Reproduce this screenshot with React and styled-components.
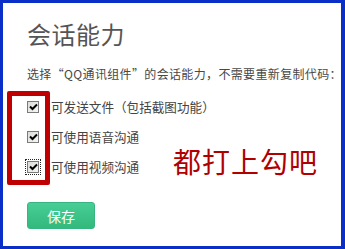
import React from "react";
import styled, { createGlobalStyle } from "styled-components";

const Global = createGlobalStyle`
  html, body { margin: 0; padding: 0; background: #ffffff; }
  body { font-family: "Noto Sans CJK SC", "Noto Sans", sans-serif; }
`;

const Frame = styled.div`
  position: relative;
  box-sizing: border-box;
  width: 345px;
  height: 249px;
  border-style: solid;
  border-color: #0a2fc8;
  border-width: 3px 4px 3px 3px;
  background: #ffffff;
  padding: 14px 0 0 24px;
  display: flex;
  flex-direction: column;
  align-items: flex-start;
`;

const Title = styled.h1`
  margin: 0;
  font-size: 24px;
  line-height: 34px;
  font-weight: 400;
  color: #555555;
  letter-spacing: 0.5px;
`;

const Intro = styled.p`
  margin: 14px 0 0 0;
  font-size: 12px;
  line-height: 18px;
  color: #484848;
  white-space: nowrap;
  letter-spacing: 0.35px;
`;

const Options = styled.div`
  margin-top: 14px;
  display: flex;
  flex-direction: column;
  gap: 11px;
`;

const Row = styled.label`
  display: flex;
  align-items: center;
  gap: 12px;
  height: 19px;
  font-size: 12.6px;
  color: #444444;
`;

const Box = styled.span`
  box-sizing: border-box;
  width: 12px;
  height: 12px;
  border: 1px solid #7a7a7a;
  background: linear-gradient(135deg, #dcdcd8 0%, #f6f6f4 100%);
  display: flex;
  align-items: center;
  justify-content: center;
  outline: ${(p) => (p.$focus ? "1px dotted #222" : "none")};
  outline-offset: 1px;
`;

const SaveButton = styled.button`
  margin-top: 26px;
  width: 68px;
  height: 27px;
  border: 1px solid #36b57f;
  border-radius: 3px;
  background: linear-gradient(#47ce96, #33b97c);
  color: #ffffff;
  font-family: "Noto Sans CJK SC", sans-serif;
  font-size: 14px;
  padding: 0;
`;

const Highlight = styled.div`
  position: absolute;
  left: 4px;
  top: 88px;
  width: 43px;
  height: 94px;
  box-sizing: border-box;
  border: 5px solid #c00000;
  border-radius: 2px;
`;

const Note = styled.div`
  position: absolute;
  left: 170px;
  top: 140px;
  font-size: 28px;
  line-height: 36px;
  color: #b00000;
  letter-spacing: 1px;
`;

const Check = () => (
  <svg width="9" height="8" viewBox="0 0 9 8">
    <path d="M1 3.5 L3.5 6 L8 1.5" fill="none" stroke="#000" strokeWidth="2" />
  </svg>
);

const options = [
  { label: "可发送文件（包括截图功能）" },
  { label: "可使用语音沟通" },
  { label: "可使用视频沟通", focus: true },
];

export default function App() {
  return (
    <>
      <Global />
      <Frame>
        <Title>会话能力</Title>
        <Intro>选择“QQ通讯组件”的会话能力，不需要重新复制代码：</Intro>
        <Options>
          {options.map((o) => (
            <Row key={o.label}>
              <Box $focus={o.focus}>
                <Check />
              </Box>
              {o.label}
            </Row>
          ))}
        </Options>
        <SaveButton>保存</SaveButton>
        <Highlight />
        <Note>都打上勾吧</Note>
      </Frame>
    </>
  );
}
